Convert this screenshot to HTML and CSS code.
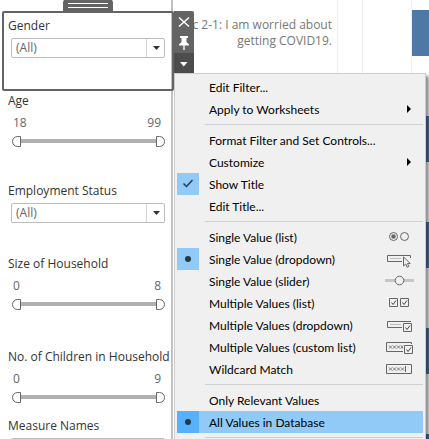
FILE: index.html
```
<!DOCTYPE html>
<html lang="en">
<head>
<meta charset="utf-8">
<meta name="viewport" content="width=device-width">
<title>Survey dashboard</title>
<link rel="stylesheet" href="styles.css">
</head>
<body>
<div class="dashboard">
  <aside class="filters">
    <section class="filter filter-selected">
      <span class="grip"></span>
      <label class="filter-title" for="gender">Gender</label>
      <div class="dropdown">
        <select id="gender"><option>(All)</option></select>
        <svg class="caret" viewBox="0 0 7 4"><path d="M0 0H7L3.500 4Z"/></svg>
      </div>
      <div class="tools">
        <button type="button" class="tool" aria-label="Remove"><svg viewBox="0 0 20 20"><path class="tool-line" d="M5 5.500L15 14.500M15 5.500L5 14.500"/></svg></button>
        <button type="button" class="tool" aria-label="Pin"><svg viewBox="0 0 20 20"><path d="M6 3H14V5H12.500V9L15 11.500V12.500H10.700V17H9.300V12.500H5V11.500L7.500 9V5H6Z"/></svg></button>
        <button type="button" class="tool tool-open" aria-label="More options"><svg viewBox="0 0 20 20"><path d="M6 8H13.500L9.750 12.500Z"/></svg></button>
      </div>
    </section>
    <section class="filter">
      <h2 class="filter-title">Age</h2>
      <div class="range-values"><span>18</span><span>99</span></div>
      <div class="range">
        <input type="range" class="range-low" min="18" max="99" value="18" aria-label="Minimum age">
        <input type="range" class="range-high" min="18" max="99" value="99" aria-label="Maximum age">
      </div>
    </section>
    <section class="filter">
      <label class="filter-title" for="employment">Employment Status</label>
      <div class="dropdown">
        <select id="employment"><option>(All)</option></select>
        <svg class="caret" viewBox="0 0 7 4"><path d="M0 0H7L3.500 4Z"/></svg>
      </div>
    </section>
    <section class="filter">
      <h2 class="filter-title">Size of Household</h2>
      <div class="range-values"><span>0</span><span>8</span></div>
      <div class="range">
        <input type="range" class="range-low" min="0" max="8" value="0" aria-label="Minimum household size">
        <input type="range" class="range-high" min="0" max="8" value="8" aria-label="Maximum household size">
      </div>
    </section>
    <section class="filter">
      <h2 class="filter-title">No. of Children in Household</h2>
      <div class="range-values"><span>0</span><span>9</span></div>
      <div class="range">
        <input type="range" class="range-low" min="0" max="9" value="0" aria-label="Minimum children">
        <input type="range" class="range-high" min="0" max="9" value="9" aria-label="Maximum children">
      </div>
    </section>
    <section class="filter">
      <label class="filter-title" for="measures">Measure Names</label>
      <div class="dropdown">
        <select id="measures"><option>(All)</option></select>
      </div>
    </section>
  </aside>

  <main class="chart">
    <div class="chart-labels"><p>c 2-1: I am worried about<br>getting COVID19.</p></div>
    <div class="chart-column"></div>
    <div class="chart-column"></div>
    <div class="bars"><i class="bar"></i><i class="bar"></i><i class="bar"></i><i class="bar"></i><i class="bar"></i></div>
  </main>

  <div class="menu" role="menu">
    <button type="button" class="item" role="menuitem"><span class="mark"></span><span class="name">Edit Filter...</span></button>
    <button type="button" class="item" role="menuitem"><span class="mark"></span><span class="name">Apply to Worksheets</span><svg class="submenu" viewBox="0 0 4 8"><path d="M0 0L4 4L0 8Z"/></svg></button>
    <hr>
    <button type="button" class="item" role="menuitem"><span class="mark"></span><span class="name">Format Filter and Set Controls...</span></button>
    <button type="button" class="item" role="menuitem"><span class="mark"></span><span class="name">Customize</span><svg class="submenu" viewBox="0 0 4 8"><path d="M0 0L4 4L0 8Z"/></svg></button>
    <button type="button" class="item" role="menuitemcheckbox" aria-checked="true"><span class="mark mark-on"><svg viewBox="0 0 22 22"><path class="tick" d="M6.500 10.500L9.500 13.500L15.500 7"/></svg></span><span class="name">Show Title</span></button>
    <button type="button" class="item" role="menuitem"><span class="mark"></span><span class="name">Edit Title...</span></button>
    <hr>
    <button type="button" class="item" role="menuitemradio"><span class="mark"></span><span class="name">Single Value (list)</span>
      <svg class="kind" viewBox="0 0 30 20"><circle cx="8.500" cy="9.500" r="4"/><circle class="solid" cx="8.500" cy="9.500" r="2.200"/><circle cx="19.500" cy="9.500" r="4"/></svg></button>
    <button type="button" class="item" role="menuitemradio" aria-checked="true"><span class="mark mark-on"><svg viewBox="0 0 22 22"><circle class="dot" cx="11" cy="11" r="3"/></svg></span><span class="name">Single Value (dropdown)</span>
      <svg class="kind" viewBox="0 0 30 20"><path d="M17 12.500H2.500V6.500H25.500V9"/><path class="faint" d="M5 9.500H16"/><path class="paper" d="M18.500 8V17L20.700 15L22.200 18.300L23.800 17.500L22.500 14.500H25.300Z"/></svg></button>
    <button type="button" class="item" role="menuitemradio"><span class="mark"></span><span class="name">Single Value (slider)</span>
      <svg class="kind" viewBox="0 0 30 20"><path class="rail" d="M0 9.500H29"/><circle class="paper" cx="14.500" cy="9.500" r="4.300"/></svg></button>
    <button type="button" class="item" role="menuitemradio"><span class="mark"></span><span class="name">Multiple Values (list)</span>
      <svg class="kind" viewBox="0 0 30 20"><path d="M4.500 5.500H12.500V13.500H4.500ZM15.500 5.500H23.500V13.500H15.500Z"/><path class="check" d="M6.500 9.500L8 11.500L11 7.500M17.500 9.500L19 11.500L22 7.500"/></svg></button>
    <button type="button" class="item" role="menuitemradio"><span class="mark"></span><span class="name">Multiple Values (dropdown)</span>
      <svg class="kind" viewBox="0 0 30 20"><path d="M17 12.500H2.500V6.500H26"/><path class="faint" d="M5 9.500H16"/><path class="paper" d="M18.500 8.500H26.500V16.500H18.500Z"/><path class="check" d="M20.500 12.500L22 14.500L25 10.500"/></svg></button>
    <button type="button" class="item" role="menuitemradio"><span class="mark"></span><span class="name">Multiple Values (custom list)</span>
      <svg class="kind" viewBox="0 0 30 20"><path d="M18 14.500H1.500V5.500H26.500V7"/><path class="cross" d="M4 8.500L7 11.500M7 8.500L4 11.500M8 8.500L11 11.500M11 8.500L8 11.500M12 8.500L15 11.500M15 8.500L12 11.500M16 8.500L18 11.500M18 8.500L16 11.500"/><path class="paper" d="M19.500 8.500H27.500V16.500H19.500Z"/><path class="check" d="M21.500 12.500L23 14.500L26 10.500"/></svg></button>
    <button type="button" class="item" role="menuitemradio"><span class="mark"></span><span class="name">Wildcard Match</span>
      <svg class="kind" viewBox="0 0 30 20"><path d="M1.500 5.500H26.500V14.500H1.500ZM20.500 7V13"/><path class="cross" d="M4 8.500L7 11.500M7 8.500L4 11.500M8 8.500L11 11.500M11 8.500L8 11.500M12 8.500L15 11.500M15 8.500L12 11.500M16 8.500L19 11.500M19 8.500L16 11.500"/></svg></button>
    <hr>
    <button type="button" class="item" role="menuitemradio"><span class="mark"></span><span class="name">Only Relevant Values</span></button>
    <button type="button" class="item item-active" role="menuitemradio" aria-checked="true"><span class="mark mark-on"><svg viewBox="0 0 22 22"><circle class="dot" cx="11" cy="11" r="3"/></svg></span><span class="name">All Values in Database</span></button>
    <hr>
  </div>
</div>
</body>
</html>
```
FILE: styles.css
```
* {
  box-sizing: border-box;
}

body {
  margin: 0;
  background: #fff;
  color: #333;
  font: 12px/18px "Open Sans", "Noto Sans", sans-serif;
}

.dashboard {
  position: relative;
  display: flex;
  height: 100vh;
  overflow: hidden;
}

/* Filter column */

.filters {
  display: grid;
  flex: none;
  grid-template-rows: 75px 90px 73px 93px 69px auto;
  width: 173px;
  padding: 17px 6px 0 8px;
  border-right: 2px solid #c2c2c2;
}

.filter {
  min-width: 0;
}

.filter-title {
  display: block;
  margin: 0;
  font-size: 12px;
  font-weight: 400;
  line-height: 18px;
  white-space: nowrap;
}

.filter-selected {
  position: relative;
}

.filter-selected::before {
  content: "";
  position: absolute;
  inset: -6px -9px 1px -6px;
  border: 2px solid #646464;
  border-radius: 2px;
  pointer-events: none;
}

.grip {
  position: absolute;
  top: -18px;
  left: 55px;
  width: 50px;
  height: 13px;
  border-radius: 4px 4px 0 0;
  background: linear-gradient(#fff, #fff) 5px 4px / 40px 1px no-repeat,
    linear-gradient(#fff, #fff) 5px 8px / 40px 1px no-repeat, #646464;
}

.dropdown {
  position: relative;
  margin: 3px 0 0 3px;
}

select {
  display: block;
  width: 100%;
  height: 20px;
  padding: 0 24px 0 4px;
  border: 1px solid #bdbdbd;
  border-radius: 2px;
  appearance: none;
  background: linear-gradient(#d4d4d4, #d4d4d4) right 17px top / 1px 100% no-repeat, #fff;
  color: #666;
  font: inherit;
  line-height: 18px;
}

.caret {
  position: absolute;
  top: 8px;
  right: 5px;
  width: 7px;
  height: 4px;
  fill: #333;
  pointer-events: none;
}

.range-values {
  display: flex;
  justify-content: space-between;
  margin: 4px 4px 0 5px;
  color: #666;
}

.range {
  display: grid;
  height: 12px;
  margin: 3px 0 0 4px;
  background: linear-gradient(#b0b0b0, #b0b0b0) 8px 4px / calc(100% - 16px) 4px no-repeat;
}

.range input {
  grid-area: 1 / 1;
  width: 100%;
  height: 12px;
  margin: 0;
  appearance: none;
  background: none;
  pointer-events: none;
}

.range input::-webkit-slider-thumb {
  width: 9px;
  height: 11px;
  border: 1px solid #666;
  appearance: none;
  background: #fff;
  pointer-events: auto;
}

.range-low::-webkit-slider-thumb {
  border-radius: 6px 0 0 6px;
}

.range-high::-webkit-slider-thumb {
  border-radius: 0 6px 6px 0;
}

/* Toolbar of the selected filter */

.tools {
  position: absolute;
  top: -6px;
  left: 166px;
  z-index: 1;
  width: 20px;
  border-radius: 0 2px 0 0;
  overflow: hidden;
}

.tool {
  display: block;
  width: 20px;
  height: 21px;
  padding: 0;
  border: 0;
  background: #646464;
}

.tool svg {
  display: block;
  width: 20px;
  height: 20px;
  fill: #fff;
}

.tool-open {
  background: #4c4c4c;
}

.tool-line {
  fill: none;
  stroke: #fff;
  stroke-width: 1.5;
}

/* Chart behind the menu */

.chart {
  display: grid;
  flex: 1;
  grid-template-columns: 165px 25px 49px 1fr;
}

.chart-labels {
  padding: 17px 5px 0 0;
  border-right: 1px solid #eee;
  color: #777;
  line-height: 16px;
  text-align: right;
  white-space: nowrap;
}

.chart-labels p {
  margin: 0;
}

.chart-column {
  border-right: 1px solid #eee;
}

.bars {
  display: flex;
  flex-direction: column;
  gap: 60px;
  padding-top: 10px;
}

.bar {
  flex: none;
  height: 46px;
  background: #4e79a7;
}

/* Context menu */

.menu {
  position: absolute;
  top: 73px;
  left: 174px;
  z-index: 2;
  width: 252px;
  padding: 2px;
  border: 1px solid #ccc;
  background: #f0f0f0;
  box-shadow: 3px 3px 3px rgba(0, 0, 0, 0.45);
}

.item {
  display: flex;
  align-items: center;
  width: 100%;
  height: 22px;
  padding: 0;
  border: 0;
  background: none;
  color: #000;
  font: 12px/22px Lato, "Open Sans", sans-serif;
  text-align: left;
}

.item-active {
  background: #91c9f7;
}

.mark {
  flex: none;
  width: 22px;
  height: 22px;
  margin-right: 10px;
}

.mark svg {
  display: block;
  width: 22px;
  height: 22px;
}

.mark-on {
  background: #91c9f7;
}

.item-active .mark-on {
  background: #56b0fa;
}

.name {
  flex: 1;
  padding-top: 2px;
  white-space: nowrap;
}

.dot {
  fill: #263746;
}

.tick {
  fill: none;
  stroke: #1f3d57;
  stroke-width: 1.5;
}

.submenu {
  width: 4px;
  height: 8px;
  margin-right: 12px;
}

.menu hr {
  height: 1px;
  margin: 4px 0 4px 28px;
  border: 0;
  background: #d0d0d0;
}

.kind {
  width: 30px;
  height: 20px;
  margin-right: 8px;
  fill: none;
  stroke: #666;
  stroke-width: 1;
}

.kind .solid {
  fill: #666;
  stroke: none;
}

.kind .paper {
  fill: #f0f0f0;
}

.kind .faint {
  stroke: #bbb;
}

.kind .rail {
  stroke: #c6c6c6;
  stroke-width: 3;
}

.kind .check {
  stroke: #444;
}

.kind .cross {
  stroke: #777;
}
```
